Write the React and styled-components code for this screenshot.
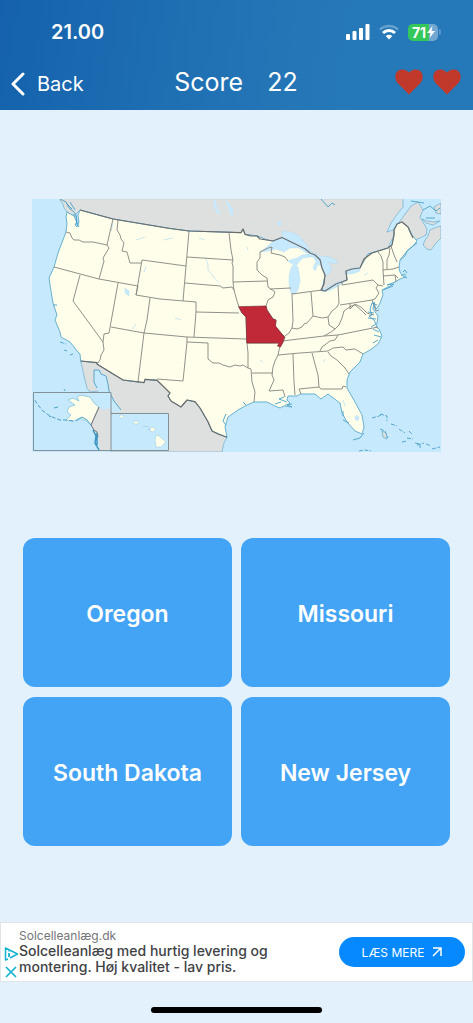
import React from 'react'
import styled, { createGlobalStyle } from 'styled-components'

const states = [
  'Oregon',
  'Missouri',
  'South Dakota',
  'New Jersey',
]

const canada =
  'M59 199 L63 204 64 208 67 212 72 215 76 214 80 210 113 219 170 228.500 189 231 241 232.700 243 229 245 234.300 257 236 267 240 273 241 282 237.500 305 248.700 310 253 320 259.700 325 275 322 289.700 325 291 347 280 346 271 360 268 368 254 388 248 394 235 397 224 402 222 408 227 412 235 415 240 420 238 426 235 427 229 420 217 423 210 418 202 411 206 400 221 393 230 387 232 391 223 398 213 403 207 403 199 Z'

const novaScotia =
  'M430 230 L437 227 441 226 441 238 436 243 431 250 427 249 423 245 425 240 428 236 Z M422 219 L427 221 433 222 440 221 433 225 426 223 Z M434 207 L441 203 441 214 436 213 Z'

const mexico =
  'M80.700 361 L97 362.700 97.300 364.300 123 380 144 382.700 145 379.300 157 380.300 164 387 170 393 168 396 171 401 181 407 187 400 195 401.700 200 408 208 421.700 212 431 227 437.300 224 443 222 452 111 452 111 412 106 402 98 391 90 392 87 388 84 376 Z'

const mainland =
  'M67 212 L72 215 76 216 77 221 75 225 77 227 79 222 78 215 80 210 113 219 170 228.500 189 231 241 232.700 243 229 245 234.300 257 236 260 237 267 240 273 241 282 237.500 305 248.700 310 253 320 259.700 322 268 325 275 322 289.700 325 291 347 280 346 271 360 268 368 254 388 248 392 245 394 235 394 230 397 224 402 222 408 227 412 235 417 241 413 246 407 251 405 256 400 260 399 268 400 272 402 275 405 274 405 277 400 279 395 282 387 285 394 284 382 290 383 295 380 303 378 307 376 309 374 302 373 309 378 316 377 323 376 327 379 329 382 336 378 344 370 350 363 354 360 362 350 372 347 380 347 388 355 402 362 415 364 427 362 434 355 431 347 422 342 413 340 403 328 394 321 399 315 394 300 394 297 396 288 396 287 400 290 403 287 405 292 407 284 406 280 408 275 406 267 402 254 402 247 405 238 410 228 417 225 427 227 437.300 212 431 208 422 200 408 195 402 187 400 181 407 171 401 168 396 170 393 164 387 157 380 145 379.300 144 382.700 123 380 97.300 364.300 97 362.700 80.700 361 80 354 78 352 70 342 61 337 60 332 55 320 57 315 53 303 51 291 49 278 54 267 58 253 66 232 67 223 66 217 Z'

const lakes = [
  'M260 252 L268 246 273 241 282 237 282 231 291 232 299 236 307 245 311 252 306 253 299 248 290 248 284 252 276 249 268 251 Z',
  'M291 293 L289 285 289 276 291 268 295 262 292 264 288 261 293 259 297 258 302 255 308 254 311 257 303 258 299 262 296 266 298 267 299 273 300 281 298 290 295 294 Z',
  'M308 250 L320 256 330 257 337 261 336 264 328 262 332 269 329 274 325 275 323 271 322 267 318 264 315 271 313 268 316 261 313 257 308 256 Z',
  'M321 291 L327 287 331 285 341 281 347 280 340 285 331 290 324 292 Z',
  'M346 271 L352 268 360 267 360 271 352 274 346 274 Z',
]

const borders = [
  '66,232 70,233 72,238 74,240 79,240 83,242 93,242 107,245',
  '113,219 107,245 109,248 103,258 104,261 99,279',
  '54,267 99,279 138,286',
  '118,220 117,230 120,235 121,239 124,243 122,251 127,252 130,263 141,263',
  '186,266 142,260 136,295 160,299 196,302 196,312 239,313',
  '189,231 183,301',
  '187,257 233,260',
  '185,283 220,286 223,288 232,287 234,290',
  '229,233 231,250 233,260 232,263 233,266 233,282 234,290 237,301 239,307 242,313 246,317 247,343 248,353 248,368 251,369 252,382 255,392 254,402',
  '233,282 267,281',
  '272,247 268,248 260,252 260,258 257,262 257,270 262,275 267,278 268,287 275,292 273,297 268,300 266,306 267,310 273,319 276,320 275,326 281,333 285,337 283,342 280,346 278,355 275,361 273,367 272,375 274,380 269,391 283,390 285,397',
  '272,247 271,253 280,255 285,257 288,261',
  '270,289 291,288',
  '292,293 293,321 292,328 289,333 285,336',
  '292,294 322,290',
  '311,292 313,316',
  '292,328 297,329 302,327 304,324 307,323 313,316 322,318 328,317 332,311 337,307 339,303 338,285',
  '342,282 342,285 373,280 378,285 376,288 379,293 375,299 372,300 340,305',
  '378,285 383,286',
  '328,317 329,325 335,329 339,325 342,318 344,311 351,306 355,305 361,310 366,315',
  '350,304 350,309 355,304 361,307 367,313 374,315',
  '335,329 331,332 324,336',
  '282,341 324,336 338,335 378,327',
  '338,335 335,340 330,341 322,347 320,351',
  '278,355 300,353 328,351 333,348 343,347 346,350 355,349 363,354',
  '328,352 331,356 337,360 345,368 349,374',
  '312,353 318,375 319,387 321,389 342,389 343,386 346,387',
  '293,354 294,382 295,395',
  '319,387 299,389 301,394',
  '247,343 279,343',
  '252,373 273,373',
  '196,312 194,337',
  '150,298 147,320 144,333 138,382',
  '111,327 144,333 187,337 246,339',
  '187,337 187,342 208,343 208,359 213,363 219,363 223,365 230,367 235,365 240,366 243,365 248,368',
  '187,342 183,381 157,379',
  '138,286 136,295',
  '80,275 73,301 103,342 104,350 101,355 100,360 97,364',
  '118,283 109,333 104,334 103,342',
  '378,252 381,256 383,262 383,270 384,285',
  '390,248 389,255 387,260 387,269',
  '391,246 394,255 397,262',
  '383,270 393,269 399,267',
  '383,276 395,275 398,278',
  '395,275 396,282',
  '372,300 376,311 379,310',
]

const shores = [
  'M60 199 L66 202 69 208 74 212 76 215 77 225',
  'M66 203 L72 209 M70 202 L75 210 M74 216 L79 227 M53 305 L57 305',
  'M97 388 L94 382 94 370 99 370 101 374 106 376 108 384 109 391 114 401 121 410',
  'M377 305 L372 303 370 309 372 315 369 316 374 320 376 324 371 327',
  'M368 312 L374 313 M368 318 L376 319 M373 329 L379 332 M374 335 L381 337 M373 343 L378 340',
  'M226 414 L223 421 226 425 M284 397 L279 399 287 402 M285 405 L292 404 M246 405 L243 402',
  'M281 402 L275 404 M343 416 L343 411 M343 420 L349 423 M353 440 L360 438 364 433',
  'M383 290 L393 286 M403 272 L405 270 407 273 M401 275 L407 278 M400 260 L408 250 417 243',
  'M321 199 L328 207 332 203 335 205',
  'M423 210 L430 206 436 211 440 208 M426 218 L435 218 M411 201 L424 203',
]

const islands = [
  'M372 418 L379 416 383 414 M380 414 L387 416 387 421',
  'M380 429 L385 431 388 438 M391 424 L397 426',
  'M399 429 L405 433 M407 438 L413 439 M415 443 L420 444 420 448',
  'M417 445 L424 443 M426 444 L431 446 M432 449 L440 447',
  'M359 451 L365 450 371 451 M402 442 L407 441 M409 431 L412 434',
  'M60 342 L66 344 M64 350 L67 351 M70 355 L73 354 M64 389 L65 391',
]

const rivers = [
  'M136 240 L145 237 M163 240 L173 238 M205 257 L208 264 208 270 218 282',
  'M113 223 L111 231 M199 238 L205 240 M247 247 L248 250',
  'M132 329 L136 324 M146 266 L144 272 M175 318 L181 320',
  'M343 400 L345 406 M325 359 L323 362 M260 360 L263 362',
  'M364 275 L368 273 M249 221 L252 225',
]

const stateShape =
  'M238.700 306.700 L266 306 267 310 273 319 276 320 275.500 326 281 333 284.500 337 283 342 280.500 347 277.500 346 279 343 246.700 343 246 317 242 313 Z'

function UsaMap() {
  return (
    <Map viewBox="32 199 409 253" role="img" aria-label="Map of the United States">
      <rect x="32" y="199" width="409" height="253" fill="#c7e9fe" />
      <g fill="#dedfdf" stroke="#5aa6c9" strokeWidth="0.6">
        <path d={canada} />
        <path d={novaScotia} />
        <path d={mexico} />
      </g>
      <path d="M59 199 H403" stroke="#dedfdf" strokeWidth="1.500" />
      <path d="M94 370 L99 370 101 374 106 376 108 384 109 391 114 401 121 412 111 412 104 400 98 391 94 384 Z" fill="#c7e9fe" />
      <path d={mainland} fill="#fefeea" stroke="#4a9fc6" strokeWidth="0.8" />
      <g fill="#c7e9fe" stroke="#a4d3ea" strokeWidth="0.3">
        {lakes.map((d) => <path key={d} d={d} />)}
        <path d="M125 288 L129 291 129 296 125 293 Z" />
        <path d="M213 200 L216 201 217 208 221 213 218 214 214 207 Z M225 200 L229 203 233 210 233 217 230 214 228 207 Z M277 222 L281 220 281 226 278 226 Z" stroke="none" />
        <ellipse cx="357" cy="418" rx="2" ry="2.500" />
      </g>
      <g fill="none" stroke="#bfe1ee" strokeWidth="0.8">
        {rivers.map((d) => <path key={d} d={d} />)}
      </g>
      <g fill="none" stroke="#85857f" strokeWidth="0.9" strokeLinejoin="round">
        {borders.map((points) => <polyline key={points} points={points} />)}
      </g>
      <g fill="none" stroke="#6c6c6c" strokeWidth="1.2" strokeLinejoin="round">
        <path d="M80 210 L113 219 170 228.500 189 231 241 232.700 243 229 245 234.300 251 236 257 236 260 239 267 240 273 241 282 237.500 305 248.700 310 253 315 255 320 259.700 322 268 325 275 324 284 321 290 325 291 336 284 347 280 346 271 352 269 360 268 364 259 372 253 388 248 392 245 394 235 394 230 397 224 402 222 408 227 411 234 413 238" />
        <path d="M80.700 361 L97 362.700 97.300 364.300 123 380 144 382.700 145 379.300 157 380.300 164 387 170 393 168 396 171 401 181 407 187 400 195 401.700 200 408 208 421.700 212 431 218 434 227 437.300" />
      </g>
      <g fill="none" stroke="#4a9fc6" strokeWidth="0.9">
        {shores.map((d) => <path key={d} d={d} />)}
        {islands.map((d) => <path key={d} d={d} strokeDasharray="4 1.500" />)}
      </g>
      <path d="M382 431 L386 433 387 439 383 437 Z" fill="#dedfdf" stroke="#4a9fc6" strokeWidth="0.6" />
      <path d={stateShape} fill="#c12838" stroke="#7c3038" strokeWidth="0.7" />

      <rect x="33.500" y="392.500" width="77.500" height="58" fill="#c7e9fe" />
      <path d="M99 407 L103 410 111 408 111 450 100 450 98 437 91 425 Z" fill="#dedfdf" />
      <path d="M80 395 L90 397 94 403 99 407 91 425 86 421 80 418 74 421 66 420 71 415 67 412 69 407 75 405 68 400 73 398 79 401 77 397 Z" fill="#fefeea" stroke="#6cb5d6" strokeWidth="0.6" />
      <path d="M99 407 L91 425 94 430 97 432 98 437" fill="none" stroke="#77726f" strokeWidth="1" />
      <path d="M73 421 L66 420 60 420 50 416 43 411 38 405 34 399" fill="none" stroke="#4a9fc6" strokeWidth="1" strokeDasharray="4 2" />
      <path d="M76 421 L82 417 87 420 91 425 M54 408 L58 407 M49 416 L51 417" fill="none" stroke="#4a9fc6" strokeWidth="1" />
      <path d="M93 430 L96 436 95 443 99 450 M97 433 L97 445" fill="none" stroke="#3d94bd" strokeWidth="1.500" />
      <rect x="111" y="413.500" width="57.500" height="37" fill="#c7e9fe" />
      <g fill="#fefeea" stroke="#8fc6de" strokeWidth="0.500">
        <ellipse cx="121.500" cy="416.500" rx="2.500" ry="1.600" />
        <ellipse cx="136" cy="422.500" rx="2.800" ry="1.600" />
        <path d="M143 426 L149 427 M147 429 L150 430 M150 428 L153 427 156 430 153 432 150 431 Z" />
        <path d="M156 435 L159 436 166 442 161 447 156 447 155 440 Z" />
      </g>
      <path d="M33.500 392.500 H111 V450.500 H33.500 Z M111 413.500 H168.500 V450.500 H111" fill="none" stroke="#829098" strokeWidth="1" />
    </Map>
  )
}

function Heart() {
  return (
    <svg width="28" height="26" viewBox="0 0 28 26" aria-hidden="true">
      <path d="M14 25.500 L2.500 14 C-1.500 9 0 0.500 7.500 0.500 C11 0.500 12 2 14 3.500 C16 2 17 0.500 20.500 0.500 C28 0.500 29.500 9 25.500 14 Z" fill="#c0392b" />
    </svg>
  )
}

function App() {
  return (
    <Page>
      <GlobalStyle />
      <Header>
        <StatusBar>
          <Time>21.00</Time>
          <StatusIcons>
            <svg width="24" height="16" viewBox="0 0 24 16" fill="#fff" aria-hidden="true">
              <rect x="0" y="10" width="4" height="6" rx="1" />
              <rect x="6.500" y="7" width="4" height="9" rx="1" />
              <rect x="13" y="4" width="4" height="12" rx="1" />
              <rect x="19.500" y="0" width="4" height="16" rx="1" />
            </svg>
            <svg width="20" height="16" viewBox="0 0 20 16" fill="none" strokeWidth="3" aria-hidden="true">
              <path d="M1 5.500 C6 0.800 14 0.800 19 5.500" stroke="#fff" strokeOpacity="0.300" strokeWidth="2.500" />
              <path d="M4 9 C7.500 5.500 12.500 5.500 16 9" stroke="#fff" />
              <path d="M10 15.500 L6.700 12 C8.700 10.300 11.300 10.300 13.300 12 Z" fill="#fff" />
            </svg>
            <Battery>
              <Charge>
                71
                <svg width="8" height="12" viewBox="0 0 8 12" aria-hidden="true">
                  <path d="M5.500 0 L0 7 H3.500 L2.500 12 L8 5 H4.500 Z" fill="#fff" />
                </svg>
              </Charge>
              <BatteryTip />
            </Battery>
          </StatusIcons>
        </StatusBar>
        <NavBar>
          <BackButton type="button">
            <svg width="14" height="24" viewBox="0 0 14 24" fill="none" aria-hidden="true">
              <path d="M12 2 L2 12 L12 22" stroke="#fff" strokeWidth="3" strokeLinecap="round" strokeLinejoin="round" />
            </svg>
            Back
          </BackButton>
          <Score>
            <span>Score</span>
            <span>22</span>
          </Score>
          <Lives>
            <Heart />
            <Heart />
          </Lives>
        </NavBar>
      </Header>

      <Main>
        <UsaMap />
        <Answers>
          {states.map((name) => (
            <Answer key={name} type="button">{name}</Answer>
          ))}
        </Answers>
      </Main>

      <Ad>
        <AdChoices>
          <svg width="15" height="16" viewBox="0 0 15 16" fill="none" stroke="#13b2d3" strokeWidth="1.500" aria-hidden="true">
            <path d="M4 13 L1.500 14 V2 L13.500 8 L6 12" strokeLinejoin="round" />
            <path d="M5 7 V11 M5 4.500 V5.500" strokeWidth="1.800" />
          </svg>
          <CloseAd type="button" aria-label="Close ad">
            <svg width="12" height="12" viewBox="0 0 12 12" stroke="#13b2d3" strokeWidth="1.700" aria-hidden="true">
              <path d="M1 1 L11 11 M11 1 L1 11" />
            </svg>
          </CloseAd>
        </AdChoices>
        <AdText>
          <small>Solcelleanlæg.dk</small>
          <p>Solcelleanlæg med hurtig levering og montering. Høj kvalitet - lav pris.</p>
        </AdText>
        <AdLink href="#">
          LÆS MERE
          <svg width="10" height="10" viewBox="0 0 10 10" fill="none" stroke="#fff" strokeWidth="1.500" aria-hidden="true">
            <path d="M1 1 H9 V9 M9 1 L1 9" />
          </svg>
        </AdLink>
      </Ad>
      <HomeArea>
        <HomeIndicator />
      </HomeArea>
    </Page>
  )
}

export default App

const GlobalStyle = createGlobalStyle`
  * {
    box-sizing: border-box;
  }

  body {
    margin: 0;
    background: #e3f1fd;
    font-family: Inter, "Liberation Sans", sans-serif;
  }

  button {
    font-family: inherit;
    border: none;
    padding: 0;
    cursor: pointer;
  }
`;

const Page = styled.div`
  display: flex;
  flex-direction: column;
  min-height: 100vh;
`;

const Header = styled.header`
  background: linear-gradient(100deg, #1561ad 0%, #1a69b0 20%, #2273b5 50%, #2679b8 75%, #2679b8 100%);
  color: #fff;
`;

const StatusBar = styled.div`
  display: flex;
  justify-content: space-between;
  align-items: center;
  height: 56px;
  padding: 8px 32px 0 51px;
`;

const Time = styled.span`
  font-size: 20px;
  font-weight: 600;
`;

const StatusIcons = styled.div`
  display: flex;
  align-items: center;
  gap: 9px;
`;

const Battery = styled.div`
  display: flex;
  align-items: center;
  gap: 1px;
`;

const Charge = styled.div`
  display: flex;
  justify-content: center;
  align-items: center;
  gap: 1px;
  width: 30px;
  height: 17px;
  padding-left: 1px;
  border-radius: 5px;
  background: linear-gradient(90deg, #34c759 71%, #72a7d1 71%);
  font-size: 14px;
  font-weight: 700;
`;

const BatteryTip = styled.div`
  width: 2px;
  height: 6px;
  border-radius: 0 2px 2px 0;
  background: #5c98c8;
`;

const NavBar = styled.nav`
  display: grid;
  grid-template-columns: 1fr auto 1fr;
  align-items: center;
  height: 54px;
  padding: 0 12px 2px 11px;
`;

const BackButton = styled.button`
  display: flex;
  align-items: center;
  gap: 12px;
  justify-self: start;
  padding-top: 4px;
  background: none;
  color: #fff;
  font-size: 20px;
`;

const Score = styled.div`
  display: flex;
  gap: 24px;
  font-size: 25px;
  line-height: 32px;
`;

const Lives = styled.div`
  display: flex;
  justify-content: flex-end;
  gap: 10px;
`;

const Main = styled.main`
  flex: 1;
  padding: 89px 23px 76px;
`;

const Map = styled.svg`
  display: block;
  width: calc(100% - 18px);
  margin: 0 9px;
`;

const Answers = styled.div`
  display: grid;
  grid-template-columns: 1fr 1fr;
  gap: 10px 9px;
  margin-top: 86px;
`;

const Answer = styled.button`
  height: 149px;
  padding-top: 2px;
  border-radius: 12px;
  background: #43a4f6;
  color: #fff;
  font-size: 23px;
  font-weight: 600;
`;

const Ad = styled.aside`
  display: flex;
  align-items: center;
  height: 60px;
  padding: 0 7px 0 2px;
  border: 1px solid #e2e5e8;
  background: #fff;
`;

const AdChoices = styled.div`
  display: flex;
  flex-direction: column;
  align-items: center;
  gap: 4px;
  width: 16px;
  padding-top: 19px;
`;

const CloseAd = styled.button`
  display: flex;
  background: none;
`;

const AdText = styled.div`
  flex: 1;
  color: #3f4245;

  small {
    display: block;
    color: #737578;
    font-size: 12px;
    line-height: 14px;
  }

  p {
    max-width: 280px;
    margin: 0;
    font-size: 14px;
    font-weight: 500;
    line-height: 16px;
  }
`;

const AdLink = styled.a`
  display: flex;
  justify-content: center;
  align-items: center;
  gap: 8px;
  width: 126px;
  height: 30px;
  border-radius: 15px;
  background: #0689ff;
  color: #fff;
  font-size: 12px;
  text-decoration: none;
`;

const HomeArea = styled.footer`
  display: flex;
  justify-content: center;
  padding: 25px 0 10px;
`;

const HomeIndicator = styled.div`
  width: 36%;
  height: 6px;
  border-radius: 3px;
  background: #000;
`;
